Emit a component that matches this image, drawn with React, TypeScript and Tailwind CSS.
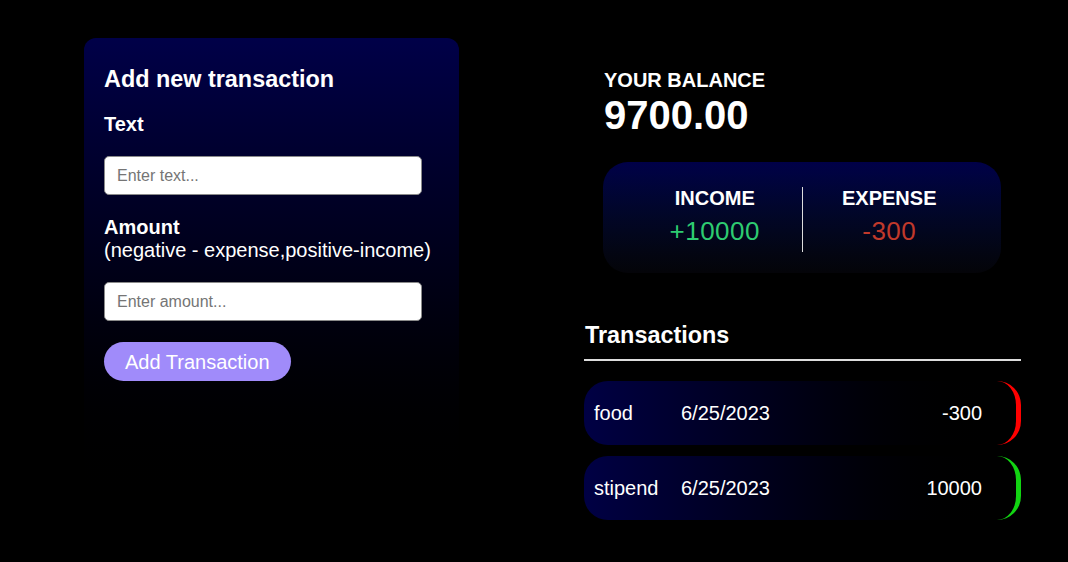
const transactions = [
  { id: 1, text: "food", date: "6/25/2023", amount: -300 },
  { id: 2, text: "stipend", date: "6/25/2023", amount: 10000 },
];

const font = { fontFamily: '"Liberation Sans", Arial, sans-serif' };

const AddTransaction = () => {
  return (
    <div className="w-[375px] rounded-[12px] bg-gradient-to-b from-[#000048] to-[#000000] px-5 pt-[28px] pb-5 text-white">
      <h3 className="text-[23.4px] leading-[27px] font-bold">Add new transaction</h3>
      <label className="mt-[20px] block text-[20px] leading-[23px] font-bold">Text</label>
      <input
        type="text"
        placeholder="Enter text..."
        className="mt-[20px] block h-[39px] w-[318px] rounded-[5px] border border-[#8a8a8a] bg-white px-3 text-[16px] text-black placeholder:text-[#757575] outline-none"
      />
      <label className="mt-[21px] block text-[20px] leading-[23px]">
        <span className="font-bold">Amount</span>
        <br />
        (negative - expense,positive-income)
      </label>
      <input
        type="number"
        placeholder="Enter amount..."
        className="mt-[20px] block h-[39px] w-[318px] rounded-[5px] border border-[#8a8a8a] bg-white px-3 text-[16px] text-black placeholder:text-[#757575] outline-none"
      />
      <button className="mt-[21px] h-[39px] rounded-full bg-[#a08bfa] px-[21px] text-[20px] text-white">
        Add Transaction
      </button>
    </div>
  );
};

const Balance = () => (
  <div className="pl-5 text-white">
    <h4 className="text-[20px] leading-[23px] font-bold">YOUR BALANCE</h4>
    <h1 className="text-[40px] leading-[46px] font-bold">9700.00</h1>
  </div>
);

const IncomeExpense = () => (
  <div className="mt-[24px] ml-[19px] flex w-[398px] rounded-[25px] bg-gradient-to-b from-[#000048] to-[#040408] px-[25px] pt-[25px] pb-[21px] text-white">
    <div className="flex-1 border-r border-[#dddddd] pb-[6px] text-center">
      <h4 className="text-[20px] leading-[23px] font-bold">INCOME</h4>
      <p className="mt-[6px] text-[26px] leading-[30px] tracking-[0.5px] text-[#2ecc71]">+10000</p>
    </div>
    <div className="flex-1 pb-[6px] text-center">
      <h4 className="text-[20px] leading-[23px] font-bold">EXPENSE</h4>
      <p className="mt-[6px] text-[26px] leading-[30px] tracking-[0.5px] text-[#c0392b]">-300</p>
    </div>
  </div>
);

const TransactionList = () => (
  <div className="mt-[49px] w-[437px] text-white">
    <h3 className="border-b-2 border-[#dddddd] pl-px pb-[10px] text-[23.4px] leading-[27px] font-bold">Transactions</h3>
    <ul className="mt-[20px] flex flex-col gap-[11px]">
      {transactions.map((t) => (
        <li
          key={t.id}
          className={
            "flex h-[64px] items-center rounded-[24px] border-r-[5px] bg-gradient-to-r from-[#000044] to-[#000000] pr-[34px] pl-[10px] text-[20px] " +
            (t.amount < 0 ? "border-[#ff0000]" : "border-[#12d412]")
          }
        >
          <span className="w-[87px]">{t.text}</span>
          <span>{t.date}</span>
          <span className="ml-auto">{t.amount}</span>
        </li>
      ))}
    </ul>
  </div>
);

export default function App() {
  return (
    <div className="min-h-screen bg-black" style={font}>
      <div className="flex pt-[38px] pl-[84px]">
        <AddTransaction />
        <div className="ml-[125px] pt-[31px]">
          <Balance />
          <IncomeExpense />
          <TransactionList />
        </div>
      </div>
    </div>
  );
}
